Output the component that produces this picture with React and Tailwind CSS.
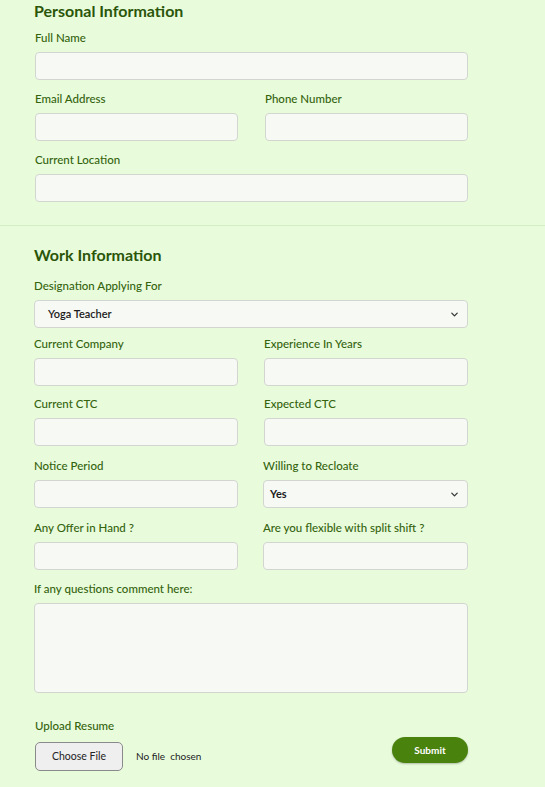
import React from "react";

const Label = ({ children }) => (
  <label className="block h-[15px] leading-[15px] mb-[7px] text-[11.5px] font-medium text-[#35630e]">
    {children}
  </label>
);

const Input = ({ h = "h-[28px]" }) => (
  <div className={`${h} w-full rounded-[4px] border border-[#d3d6d0] bg-[#f7f9f5]`} />
);

const Chevron = () => (
  <svg className="w-[9px] h-[9px]" viewBox="0 0 10 10" fill="none" stroke="#333" strokeWidth="1.4">
    <path d="M2 3.5 L5 6.5 L8 3.5" strokeLinecap="round" strokeLinejoin="round" />
  </svg>
);

const Select = ({ value, bold }) => (
  <div className="h-[28px] w-full rounded-[4px] border border-[#d3d6d0] bg-[#f7f9f5] flex items-center justify-between pr-[8px]">
    <span className={`text-[11px] text-[#1c1c1c] ${bold ? "font-bold pl-[6px]" : "font-semibold pl-[13px]"}`}>{value}</span>
    <Chevron />
  </div>
);

const Field = ({ label, children }) => (
  <div>
    <Label>{label}</Label>
    {children || <Input />}
  </div>
);

export default function App() {
  return (
    <div className="min-h-screen w-[545px] bg-[#e8fcdc] font-['Lato',sans-serif]">
      <section className="pl-[35px] pr-[77px] pt-px pb-[23px]">
        <h2 className="-ml-px h-[20px] leading-[20px] text-[16px] font-bold text-[#2b560a]">Personal Information</h2>
        <div className="mt-[9px] flex flex-col gap-[11px]">
          <Field label="Full Name" />
          <div className="grid grid-cols-2 gap-x-[27px]">
            <Field label="Email Address" />
            <Field label="Phone Number" />
          </div>
          <Field label="Current Location" />
        </div>
      </section>

      <div className="border-t border-[#d4ecc6]" />

      <section className="pl-[34px] pr-[77px] pt-[19px]">
        <h2 className="h-[20px] leading-[20px] text-[16px] font-bold text-[#2b560a]">Work Information</h2>
        <div className="mt-[13px]">
          <Field label="Designation Applying For">
            <Select value="Yoga Teacher" />
          </Field>
        </div>
        <div className="mt-[8px] grid grid-cols-2 gap-x-[26px]">
          <Field label="Current Company" />
          <Field label="Experience In Years" />
        </div>
        <div className="mt-[10px] grid grid-cols-2 gap-x-[26px]">
          <Field label="Current CTC" />
          <Field label="Expected CTC" />
        </div>
        <div className="mt-[12px] grid grid-cols-2 gap-x-[26px]">
          <Field label="Notice Period" />
          <div className="-ml-px">
            <Label>Willing to Recloate</Label>
            <Select value="Yes" bold />
          </div>
        </div>
        <div className="mt-[12px] grid grid-cols-2 gap-x-[26px]">
          <Field label="Any Offer in Hand ?" />
          <div className="-ml-px">
            <Label>Are you flexible with split shift ?</Label>
            <Input />
          </div>
        </div>
        <div className="mt-[11px]">
          <Label>If any questions comment here:</Label>
          <div className="mt-[4px]">
            <Input h="h-[90px]" />
          </div>
        </div>
      </section>

      <section className="pl-[35px] pr-[77px] pt-[25px] pb-[15px]">
        <div className="h-[15px] leading-[15px] text-[11.5px] font-medium text-[#35630e]">Upload Resume</div>
        <div className="mt-[4px] flex items-start justify-between">
          <div className="mt-[5px] flex items-center">
            <div className="h-[29px] w-[88px] rounded-[5px] border border-[#8a8a8a] bg-[#efefef] flex items-center justify-center text-[10.5px] text-[#222]">
              Choose File
            </div>
            <span className="ml-[13px] text-[10px] text-[#222]">No file&nbsp; chosen</span>
          </div>
          <button className="h-[26px] w-[76px] rounded-full bg-[#4a820e] text-white text-[10px] font-bold shadow-[0_1px_2px_rgba(0,0,0,0.25)]">
            Submit
          </button>
        </div>
      </section>
    </div>
  );
}
